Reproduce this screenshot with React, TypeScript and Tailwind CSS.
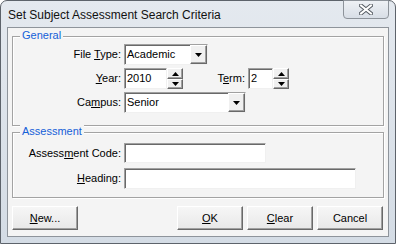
import React from "react";

const sunken =
	"bg-white border border-t-[#a0a0a0] border-l-[#a0a0a0] border-r-[#f0f0f0] border-b-[#f0f0f0] shadow-[inset_1px_1px_0_#696969]";
const raised =
	"bg-[#f0f0f0] border border-t-[#ffffff] border-l-[#ffffff] border-r-[#696969] border-b-[#696969] shadow-[inset_-1px_-1px_0_#a0a0a0]";

function DownArrow() {
	return (
		<svg width="7" height="4" viewBox="0 0 7 4">
			<path d="M0 0h7L3.5 4z" fill="#000" />
		</svg>
	);
}

function Select(props: { value: string; width: string }) {
	return (
		<div className={`flex h-[21px] ${props.width} ${sunken}`}>
			<span className="flex-1 pl-[2px] leading-[19px]">{props.value}</span>
			<div className={`w-[17px] flex items-center justify-center ${raised}`}>
				<DownArrow />
			</div>
		</div>
	);
}

function Spinner(props: { value: string; width: string }) {
	return (
		<div className="flex h-[21px]">
			<div className={`${props.width} ${sunken} pl-[2px] leading-[19px]`}>{props.value}</div>
			<div className="flex flex-col w-[16px]">
				<div className={`h-[11px] flex items-center justify-center ${raised}`}>
					<svg width="7" height="4" viewBox="0 0 7 4">
						<path d="M3.5 0L7 4H0z" fill="#000" />
					</svg>
				</div>
				<div className={`h-[10px] flex items-center justify-center ${raised}`}>
					<DownArrow />
				</div>
			</div>
		</div>
	);
}

function Label(props: { children: React.ReactNode; width?: string }) {
	return <span className={`${props.width ?? "w-[111px]"} text-right pr-[3px] leading-[21px] shrink-0`}>{props.children}</span>;
}

function Group(props: { title: string; height: string; children: React.ReactNode }) {
	return (
		<div className={`relative ${props.height} border border-[#a3a3a3] shadow-[1px_1px_0_#ffffff,inset_1px_1px_0_#ffffff]`}>
			<span className="absolute top-[-8px] left-[7px] px-[2px] bg-[#f4f4f4] text-[#1560d8] leading-[13px]">{props.title}</span>
			{props.children}
		</div>
	);
}

function Button(props: { children: React.ReactNode }) {
	return (
		<button className="w-[66px] h-[24px] bg-gradient-to-b from-[#f6f6f6] to-[#e8e8e8] border border-t-white border-l-white border-r-[#696969] border-b-[#696969] shadow-[inset_-1px_-1px_0_#a0a0a0] text-[11px] text-black">
			{props.children}
		</button>
	);
}

export default function App() {
	return (
		<div className="w-[396px] h-[244px] bg-white text-[11px] text-black" style={{ fontFamily: '"Liberation Sans", Arial, sans-serif' }}>
			<div className="flex flex-col w-[396px] h-[244px] rounded-t-[7px] border border-[#5d636b] bg-gradient-to-b from-[#e4e9ef] to-[#d4dce5]">
				{/* Title bar */}
				<div className="h-[26px] flex items-start justify-between pl-[7px] pr-[6px]">
					<span className="mt-[5px] text-[12px] text-[#111]">Set Subject Assessment Search Criteria</span>
					<div className="w-[46px] h-[19px] -mt-px rounded-b-[4px] border border-[#8d939a] bg-gradient-to-b from-[#eef1f5] to-[#d8dee6] flex items-center justify-center">
						<svg width="14" height="11" viewBox="0 0 14 11">
							<path d="M2 1.5L12 9.5M12 1.5L2 9.5" stroke="#555b62" strokeWidth="4" strokeLinecap="square" />
							<path d="M2 1.5L12 9.5M12 1.5L2 9.5" stroke="#ffffff" strokeWidth="2" strokeLinecap="square" />
						</svg>
					</div>
				</div>

				{/* Client area */}
				<div className="mx-[6px] h-[210px] border border-[#8e949b] bg-[#f4f4f4] px-[4px] pt-[8px] pb-[6px] flex flex-col">
					<Group title="General" height="h-[90px]">
						<div className="flex flex-col gap-[3px] pt-[7px]">
							<div className="flex">
								<Label>
									File <u>T</u>ype:
								</Label>
								<Select value="Academic" width="w-[84px]" />
							</div>
							<div className="flex">
								<Label>
									<u>Y</u>ear:
								</Label>
								<Spinner value="2010" width="w-[43px]" />
								<Label width="w-[65px]">
									T<u>e</u>rm:
								</Label>
								<Spinner value="2" width="w-[25px]" />
							</div>
							<div className="flex">
								<Label>
									Ca<u>m</u>pus:
								</Label>
								<Select value="Senior" width="w-[122px]" />
							</div>
						</div>
					</Group>

					<div className="mt-[6px]">
						<Group title="Assessment" height="h-[66px]">
							<div className="flex flex-col gap-[4px] pt-[10px]">
								<div className="flex">
									<Label>
										Assess<u>m</u>ent Code:
									</Label>
									<div className={`w-[142px] h-[20px] ${sunken}`} />
								</div>
								<div className="flex">
									<Label>
										<u>H</u>eading:
									</Label>
									<div className={`w-[232px] h-[21px] ${sunken}`} />
								</div>
							</div>
						</Group>
					</div>

					<div className="mt-[8px] flex justify-between pr-[1px]">
						<Button>
							<u>N</u>ew...
						</Button>
						<div className="flex gap-[4px]">
							<Button>
								<u>O</u>K
							</Button>
							<Button>
								<u>C</u>lear
							</Button>
							<Button>Cancel</Button>
						</div>
					</div>
				</div>
			</div>
		</div>
	);
}
